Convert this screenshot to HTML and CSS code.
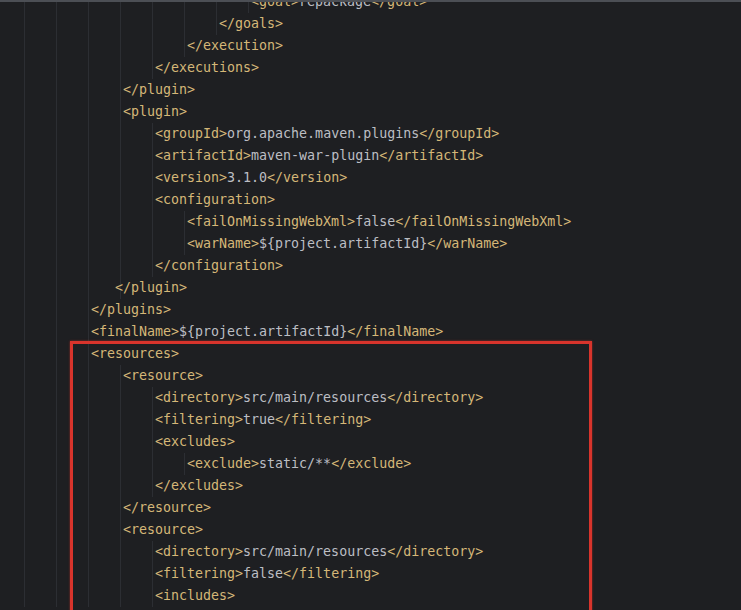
FILE: index.html
```html
<!DOCTYPE html>
<html lang="en">
<head>
    <meta charset="UTF-8">
    <meta name="viewport" content="width=device-width, initial-scale=1.0">
    <title>pom.xml</title>
    <link rel="stylesheet" href="styles.css">
</head>
<body>

    <div class="editor">
        <div class="code">
            <div class="line l7"><span class="t">&lt;goal&gt;</span>repackage<span class="t">&lt;/goal&gt;</span></div>
            <div class="line l6"><span class="t">&lt;/goals&gt;</span></div>
            <div class="line l5"><span class="t">&lt;/execution&gt;</span></div>
            <div class="line l4"><span class="t">&lt;/executions&gt;</span></div>
            <div class="line l3"><span class="t">&lt;/plugin&gt;</span></div>
            <div class="line l3"><span class="t">&lt;plugin&gt;</span></div>
            <div class="line l4"><span class="t">&lt;groupId&gt;</span>org.apache.maven.plugins<span class="t">&lt;/groupId&gt;</span></div>
            <div class="line l4"><span class="t">&lt;artifactId&gt;</span>maven-war-plugin<span class="t">&lt;/artifactId&gt;</span></div>
            <div class="line l4"><span class="t">&lt;version&gt;</span>3.1.0<span class="t">&lt;/version&gt;</span></div>
            <div class="line l4"><span class="t">&lt;configuration&gt;</span></div>
            <div class="line l5"><span class="t">&lt;failOnMissingWebXml&gt;</span>false<span class="t">&lt;/failOnMissingWebXml&gt;</span></div>
            <div class="line l5"><span class="t">&lt;warName&gt;</span>${project.artifactId}<span class="t">&lt;/warName&gt;</span></div>
            <div class="line l4"><span class="t">&lt;/configuration&gt;</span></div>
            <div class="line l3 odd"><span class="t">&lt;/plugin&gt;</span></div>
            <div class="line l2"><span class="t">&lt;/plugins&gt;</span></div>
            <div class="line l2"><span class="t">&lt;finalName&gt;</span>${project.artifactId}<span class="t">&lt;/finalName&gt;</span></div>
            <div class="line l2"><span class="t">&lt;resources&gt;</span></div>
            <div class="line l3"><span class="t">&lt;resource&gt;</span></div>
            <div class="line l4"><span class="t">&lt;directory&gt;</span>src/main/resources<span class="t">&lt;/directory&gt;</span></div>
            <div class="line l4"><span class="t">&lt;filtering&gt;</span>true<span class="t">&lt;/filtering&gt;</span></div>
            <div class="line l4"><span class="t">&lt;excludes&gt;</span></div>
            <div class="line l5"><span class="t">&lt;exclude&gt;</span>static/**<span class="t">&lt;/exclude&gt;</span></div>
            <div class="line l4"><span class="t">&lt;/excludes&gt;</span></div>
            <div class="line l3"><span class="t">&lt;/resource&gt;</span></div>
            <div class="line l3"><span class="t">&lt;resource&gt;</span></div>
            <div class="line l4"><span class="t">&lt;directory&gt;</span>src/main/resources<span class="t">&lt;/directory&gt;</span></div>
            <div class="line l4"><span class="t">&lt;filtering&gt;</span>false<span class="t">&lt;/filtering&gt;</span></div>
            <div class="line l4"><span class="t">&lt;includes&gt;</span></div>
        </div>
        <div class="mark"></div>
    </div>

</body>
</html>
```

FILE: styles.css
```css
* {
    margin: 0;
    padding: 0;
    box-sizing: border-box;
}

body {
    background-color: #1e1f22;
    height: 100vh;
    overflow: hidden;
}

.editor {
    position: relative;
    height: 610px;
    border-top: 2px solid #4c4f55;
    overflow: hidden;
    background-color: #1e1f22;
    font-family: "DejaVu Sans Mono", "Liberation Mono", monospace;
    font-size: 13.3px;
    color: #bcbec4;
}

.code {
    display: flex;
    flex-direction: column;
    margin-top: -11px;
}

.line {
    height: 22px;
    line-height: 22px;
    white-space: pre;
    background-image: repeating-linear-gradient(to right, #2c2e33 0 1px, transparent 1px 32px);
    background-position: 24px 0;
    background-repeat: no-repeat;
}

.t {
    color: #d5b778;
}

/* indent levels: text starts at 27px + 32px per level */
.l2 { padding-left: 91px;  background-size: 65px 100%; }
.l3 { padding-left: 123px; background-size: 97px 100%; }
.l4 { padding-left: 155px; background-size: 129px 100%; }
.l5 { padding-left: 187px; background-size: 161px 100%; }
.l6 { padding-left: 219px; background-size: 193px 100%; }
.l7 { padding-left: 251px; background-size: 225px 100%; }

.line.odd {
    padding-left: 115px;
}

.mark {
    position: absolute;
    left: 70px;
    top: 339px;
    width: 522px;
    height: 320px;
    border: 3px solid #d8342c;
    box-shadow: 0 0 2px rgba(216, 52, 44, 0.6);
}
```
